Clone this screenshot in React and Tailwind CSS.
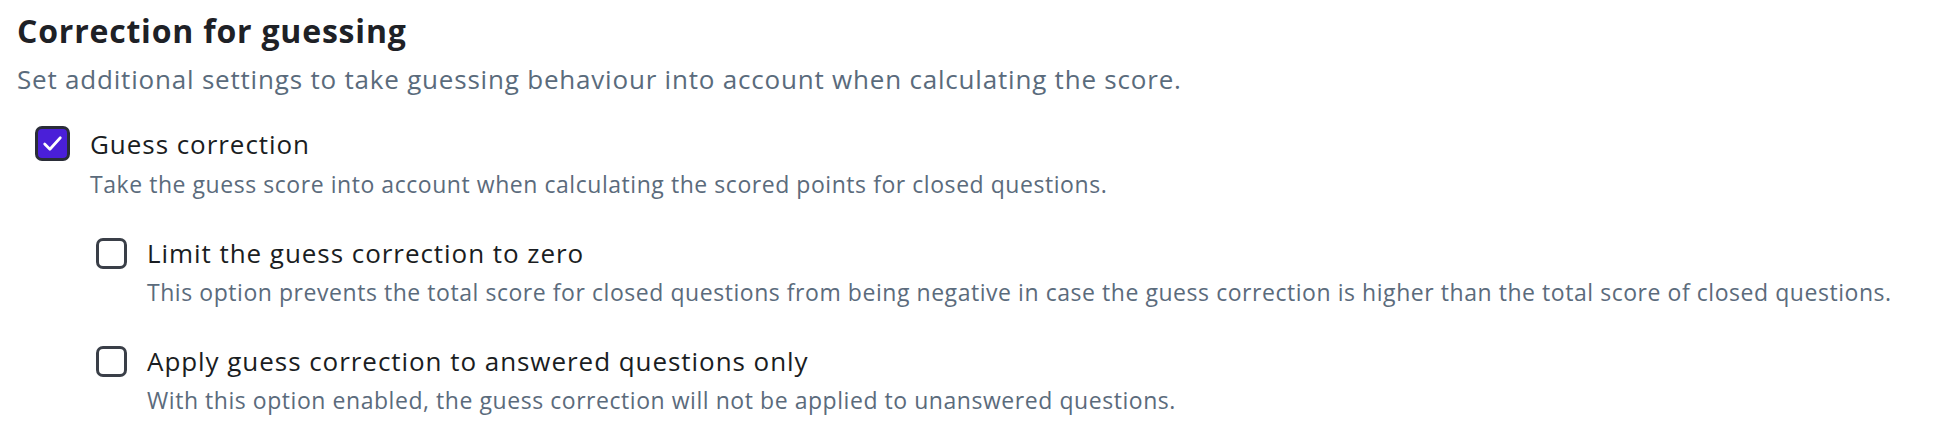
import React from "react";

function CheckIcon() {
  return (
    <svg viewBox="0 0 24 24" className="w-[25px] h-[25px]" fill="none" stroke="white" strokeWidth="2.6" strokeLinecap="round" strokeLinejoin="round">
      <path d="M4.5 12.5l5 5L19.5 6.5" />
    </svg>
  );
}

function Option({ checked, title, desc, big }) {
  return (
    <div className="flex flex-col">
      <div className="flex items-center">
        {checked ? (
          <div className={`${big ? "w-[35px] h-[35px]" : "w-[31px] h-[31px]"} shrink-0 rounded-[7px] border-[3px] border-[#2a2d38] bg-[#4a1fd8] flex items-center justify-center`}>
            <CheckIcon />
          </div>
        ) : (
          <div className={`${big ? "w-[35px] h-[35px]" : "w-[31px] h-[31px]"} shrink-0 rounded-[7px] border-[3px] border-[#3a3f48] bg-white`} />
        )}
        <div className="ml-[20px] text-[26px] leading-[32px] tracking-[0.95px] font-medium text-[#1a1d22]">{title}</div>
      </div>
      <div className={`${big ? "ml-[55px]" : "ml-[51px]"} mt-[9px] text-[23px] leading-[28px] tracking-[0.55px] text-[#5b6b7c]`}>{desc}</div>
    </div>
  );
}

export default function App() {
  return (
    <div className="w-[1952px] h-[444px] bg-white px-[17px] pt-[13px]" style={{ fontFamily: "'Open Sans', sans-serif" }}>
      <h1 className="text-[32px] leading-[36px] tracking-[0.8px] font-bold text-[#1e2126]">Correction for guessing</h1>
      <p className="mt-[14px] text-[26px] leading-[32px] tracking-[0.8px] text-[#5a6b7c]">
        Set additional settings to take guessing behaviour into account when calculating the score.
      </p>
      <div className="mt-[31px] ml-[18px]">
        <Option big checked title="Guess correction" desc="Take the guess score into account when calculating the scored points for closed questions." />
        <div className="ml-[61px] mt-[39px] flex flex-col gap-[39px]">
          <Option
            title="Limit the guess correction to zero"
            desc="This option prevents the total score for closed questions from being negative in case the guess correction is higher than the total score of closed questions."
          />
          <Option
            title="Apply guess correction to answered questions only"
            desc="With this option enabled, the guess correction will not be applied to unanswered questions."
          />
        </div>
      </div>
    </div>
  );
}
